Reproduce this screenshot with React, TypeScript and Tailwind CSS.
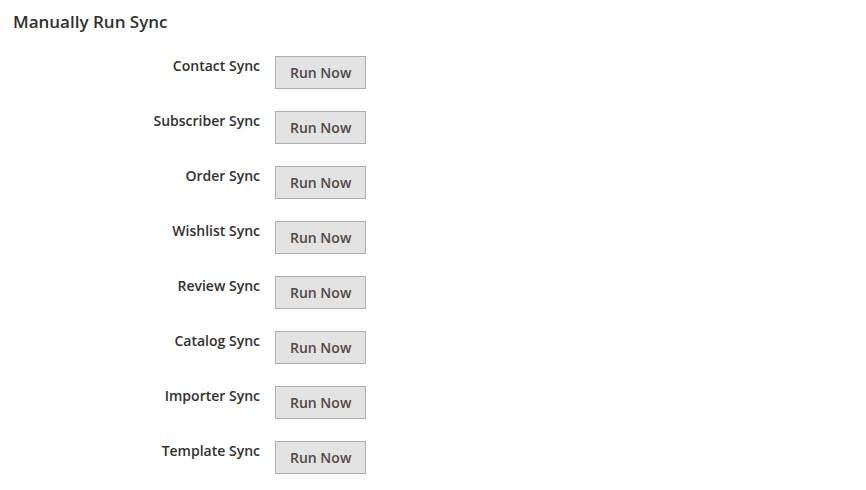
import React from 'react'

const syncs = [
  'Contact Sync',
  'Subscriber Sync',
  'Order Sync',
  'Wishlist Sync',
  'Review Sync',
  'Catalog Sync',
  'Importer Sync',
  'Template Sync',
]

export default function App() {
  return (
    <div className="min-h-[490px] bg-white px-[13px] pt-[10px] font-['Open_Sans',sans-serif] text-[#303030]">
      <h2 className="text-[17px] leading-[24px] font-semibold text-[#303030]">Manually Run Sync</h2>
      <div className="mt-[22px] grid grid-cols-[247px_auto] items-start gap-x-[15px] gap-y-[22px]">
        {syncs.map((label) => (
          <React.Fragment key={label}>
            <div className="text-right text-[14px] leading-[19px] font-semibold text-[#303030]">{label}</div>
            <div>
              <button className="border border-[#adadad] bg-[#e3e3e3] px-[14px] py-[6px] text-[14px] leading-[19px] font-semibold text-[#514943]">
                Run Now
              </button>
            </div>
          </React.Fragment>
        ))}
      </div>
    </div>
  )
}
